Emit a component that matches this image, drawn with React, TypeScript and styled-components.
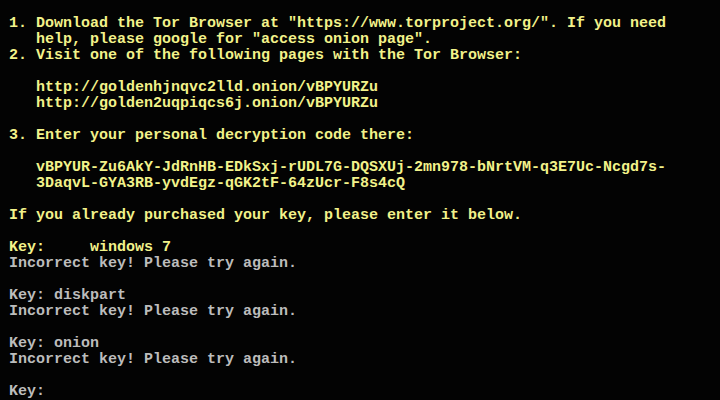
import React from "react";
import styled, { createGlobalStyle } from "styled-components";

const GlobalStyle = createGlobalStyle`
    html, body {
        margin: 0;
        padding: 0;
        background: #000;
    }
`;

type Tone = "yellow" | "grey";

const tones: Record<Tone, string> = {
    yellow: "#f2f28a",
    grey: "#bcbcbc",
};

// each row is one line of an 80x25 text screen (9x16 cells)
const lines: [string, Tone][] = [
    ["", "yellow"],
    [' 1. Download the Tor Browser at "https://www.torproject.org/". If you need', "yellow"],
    ['    help, please google for "access onion page".', "yellow"],
    [" 2. Visit one of the following pages with the Tor Browser:", "yellow"],
    ["", "yellow"],
    ["    http://goldenhjnqvc2lld.onion/vBPYURZu", "yellow"],
    ["    http://golden2uqpiqcs6j.onion/vBPYURZu", "yellow"],
    ["", "yellow"],
    [" 3. Enter your personal decryption code there:", "yellow"],
    ["", "yellow"],
    ["    vBPYUR-Zu6AkY-JdRnHB-EDkSxj-rUDL7G-DQSXUj-2mn978-bNrtVM-q3E7Uc-Ncgd7s-", "yellow"],
    ["    3DaqvL-GYA3RB-yvdEgz-qGK2tF-64zUcr-F8s4cQ", "yellow"],
    ["", "yellow"],
    [" If you already purchased your key, please enter it below.", "yellow"],
    ["", "yellow"],
    [" Key:     windows 7", "yellow"],
    [" Incorrect key! Please try again.", "grey"],
    ["", "grey"],
    [" Key: diskpart", "grey"],
    [" Incorrect key! Please try again.", "grey"],
    ["", "grey"],
    [" Key: onion", "grey"],
    [" Incorrect key! Please try again.", "grey"],
    ["", "grey"],
    [" Key:", "grey"],
];

export default function App() {
    return (
        <>
            <GlobalStyle />
            <Screen>
                {lines.map(([text, tone], index) => (
                    <Line key={index} $tone={tone}>{text}</Line>
                ))}
            </Screen>
        </>
    );
}

const Screen = styled.div`
    width: 720px;
    height: 400px;
    background-color: #030303;
    overflow: hidden;
    display: flex;
    flex-direction: column;
`;

const Line = styled.div<{ $tone: Tone }>`
    height: 16px;
    line-height: 16px;
    font-family: "Liberation Mono", "DejaVu Sans Mono", monospace;
    font-size: 15px;
    font-weight: bold;
    white-space: pre;
    color: ${(p) => tones[p.$tone]};
`;
